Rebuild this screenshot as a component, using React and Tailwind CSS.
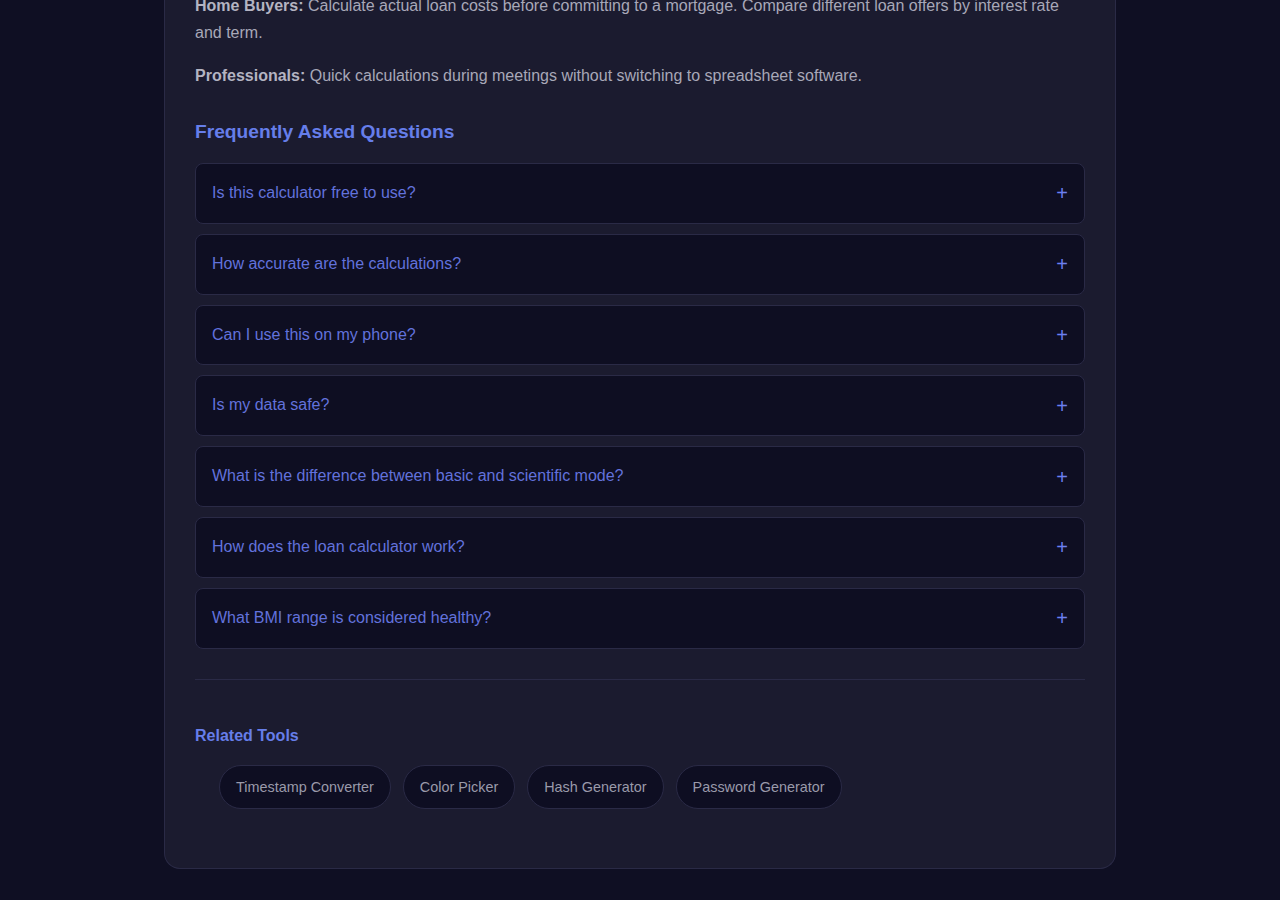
import React, { useState } from 'react';

const faqs = [
  { q: 'Is this calculator free to use?', a: 'Yes. Every calculator on this page is completely free, with no sign-up and no usage limits.' },
  { q: 'How accurate are the calculations?', a: 'Results use standard floating point math and are accurate to well beyond the decimals shown.' },
  { q: 'Can I use this on my phone?', a: 'Yes, the layout adapts to phones and tablets.' },
  { q: 'Is my data safe?', a: 'All calculations run in your browser. Nothing is sent to a server.' },
  { q: 'What is the difference between basic and scientific mode?', a: 'Scientific mode adds trigonometry, logarithms, powers and roots.' },
  { q: 'How does the loan calculator work?', a: 'It uses the standard amortization formula to work out monthly payments and total interest.' },
  { q: 'What BMI range is considered healthy?', a: 'A BMI between 18.5 and 24.9 is generally considered healthy for adults.' },
];

const tools = ['Timestamp Converter', 'Color Picker', 'Hash Generator', 'Password Generator'];

function FaqItem({ q, a }) {
  const [open, setOpen] = useState(false);
  return (
    <div className="rounded-lg border border-[#2a2a46] bg-[#0e0e22]">
      <button
        onClick={() => setOpen(!open)}
        className="flex w-full items-center justify-between px-4 py-[17px] text-left text-[16px] leading-[24.8px] text-[#6272dc]"
      >
        <span>{q}</span>
        <span className="text-[20px] font-light leading-none text-[#6b7ff0]">{open ? '−' : '+'}</span>
      </button>
      {open && <div className="px-4 pb-4 text-[15px] leading-[1.6] text-[#a0a0b0]">{a}</div>}
    </div>
  );
}

export default function App() {
  return (
    <div className="min-h-screen overflow-hidden bg-[#0f0f23] font-['Liberation_Sans',Arial,sans-serif]">
      <div className="mx-auto -mt-[8px] w-[952px] rounded-b-2xl border border-t-0 border-[#2a2a46] bg-[#1b1b2f] px-[30px] pb-[59px]">
        <p className="mb-4 text-[16px] leading-[27px] text-[#a8a8b8]">
          <strong className="font-bold text-[#b4b4c2]">Home Buyers:</strong> Calculate actual loan costs before committing to a mortgage. Compare different loan offers by interest rate and term.
        </p>
        <p className="text-[16px] leading-[27px] text-[#a8a8b8]">
          <strong className="font-bold text-[#b4b4c2]">Professionals:</strong> Quick calculations during meetings without switching to spreadsheet software.
        </p>

        <h2 className="mt-[30px] mb-[19px] text-[19.2px] font-bold leading-[25px] text-[#667eea]">Frequently Asked Questions</h2>
        <div className="flex flex-col gap-[10px]">
          {faqs.map((f) => (
            <FaqItem key={f.q} q={f.q} a={f.a} />
          ))}
        </div>

        <div className="mt-[30px] border-t border-[#2a2a46]" />

        <h3 className="mt-[44px] text-[16px] font-bold leading-6 text-[#667eea]">Related Tools</h3>
        <div className="mt-[17px] flex gap-3 pl-6">
          {tools.map((t) => (
            <a
              key={t}
              href="#"
              className="rounded-full border border-[#2a2a46] bg-[#0e0e22] px-4 py-[11px] text-[14.4px] leading-5 text-[#9a9aaa]"
            >
              {t}
            </a>
          ))}
        </div>
      </div>
    </div>
  );
}
